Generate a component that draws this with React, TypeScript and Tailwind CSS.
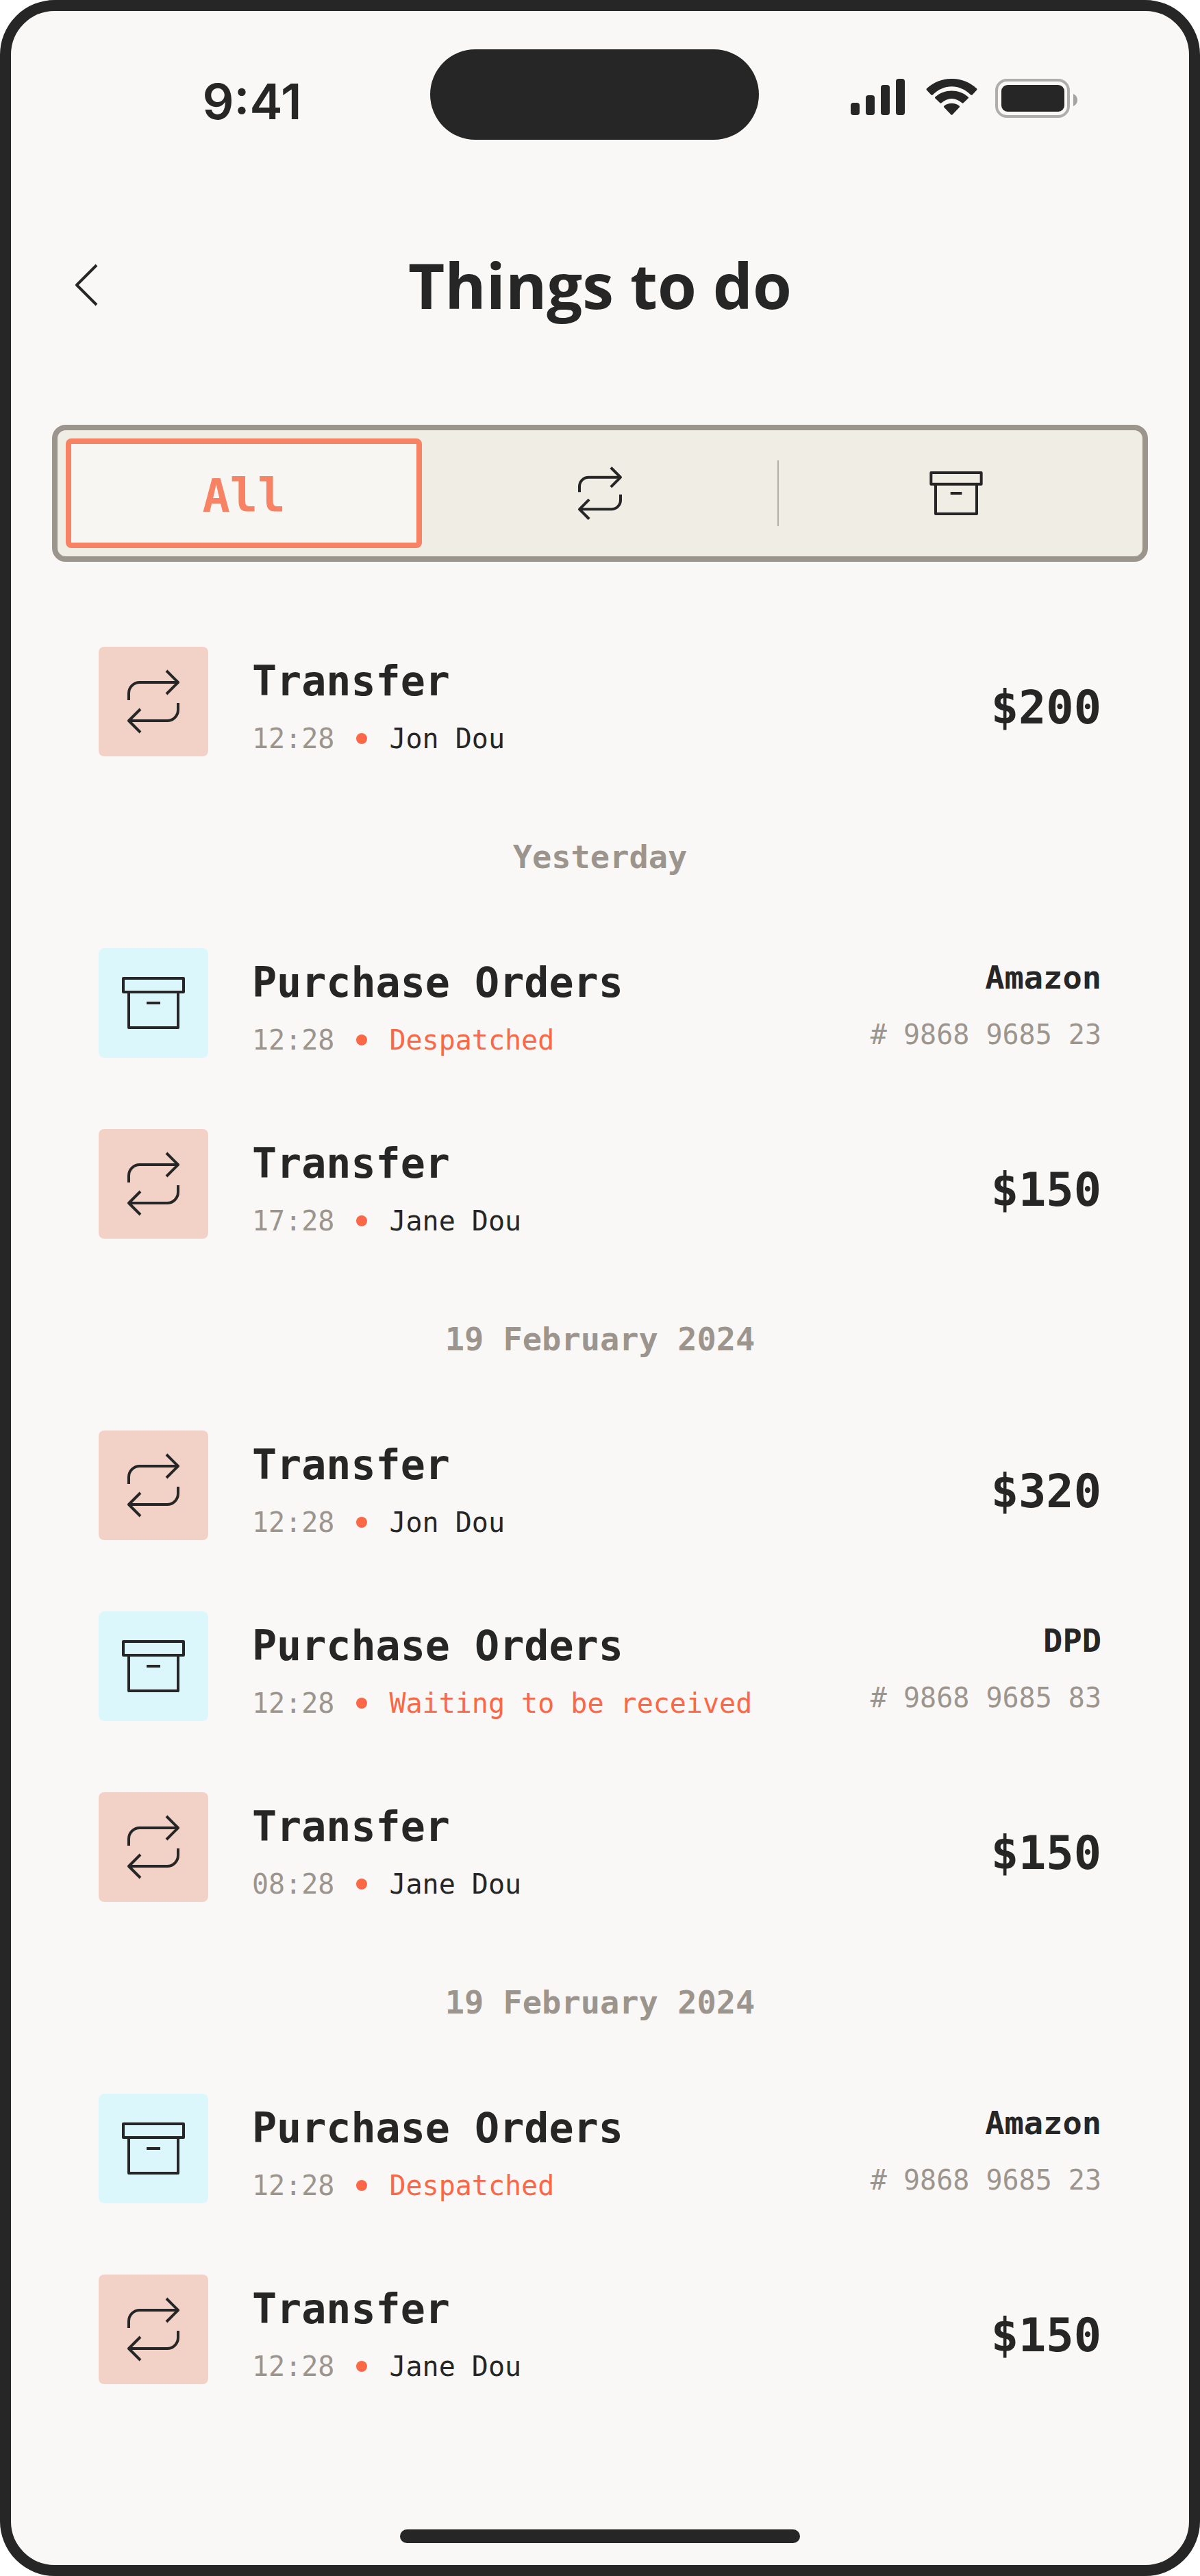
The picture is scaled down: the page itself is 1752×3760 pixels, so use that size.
import { useState } from 'react';

type Tab = 'all' | 'transfer' | 'order';

interface Item {
  id: number;
  kind: 'transfer' | 'order';
  time: string;
  detail: string;
  amount?: string;
  shop?: string;
  tracking?: string;
}

interface Day {
  id: string;
  label: string | null;
  items: Item[];
}

const days: Day[] = [
  {
    id: 'today',
    label: null,
    items: [{ id: 1, kind: 'transfer', time: '12:28', detail: 'Jon Dou', amount: '$200' }],
  },
  {
    id: 'yesterday',
    label: 'Yesterday',
    items: [
      { id: 2, kind: 'order', time: '12:28', detail: 'Despatched', shop: 'Amazon', tracking: '# 9868 9685 23' },
      { id: 3, kind: 'transfer', time: '17:28', detail: 'Jane Dou', amount: '$150' },
    ],
  },
  {
    id: 'feb-19-a',
    label: '19 February 2024',
    items: [
      { id: 4, kind: 'transfer', time: '12:28', detail: 'Jon Dou', amount: '$320' },
      { id: 5, kind: 'order', time: '12:28', detail: 'Waiting to be received', shop: 'DPD', tracking: '# 9868 9685 83' },
      { id: 6, kind: 'transfer', time: '08:28', detail: 'Jane Dou', amount: '$150' },
    ],
  },
  {
    id: 'feb-19-b',
    label: '19 February 2024',
    items: [
      { id: 7, kind: 'order', time: '12:28', detail: 'Despatched', shop: 'Amazon', tracking: '# 9868 9685 23' },
      { id: 8, kind: 'transfer', time: '12:28', detail: 'Jane Dou', amount: '$150' },
    ],
  },
];

interface IconProps {
  className: string;
  strokeWidth?: number;
}

function TransferIcon({ className, strokeWidth = 4 }: IconProps) {
  return (
    <svg viewBox="0 0 96 96" fill="none" stroke="currentColor" strokeWidth={strokeWidth} strokeLinejoin="round" className={className} aria-hidden="true">
      <path d="M12 46V36A16 16 0 0 1 28 20H84" />
      <path d="M67 3L84 20L67 37" />
      <path d="M84 50V60A16 16 0 0 1 68 76H12" />
      <path d="M29 59L12 76L29 93" />
    </svg>
  );
}

function BoxIcon({ className, strokeWidth = 4 }: IconProps) {
  return (
    <svg viewBox="0 0 96 96" fill="none" stroke="currentColor" strokeWidth={strokeWidth} strokeLinejoin="round" className={className} aria-hidden="true">
      <path d="M4 12H92V32H4Z" />
      <path d="M12 32V84H84V32" />
      <path d="M38 48H58" />
    </svg>
  );
}

function StatusIcons() {
  return (
    <svg viewBox="0 0 332 58" fill="currentColor" className="h-[58px] w-[332px]" aria-hidden="true">
      <rect x="0" y="35" width="13" height="18" rx="4" />
      <rect x="22" y="24" width="13" height="29" rx="4" />
      <rect x="44" y="9" width="13" height="44" rx="4" />
      <rect x="66" y="0" width="13" height="53" rx="4" />
      <path d="M184 16.500L177.500 23.500C176.900 24 176 24 175.300 23.400C167.500 15.500 157.500 11.200 147.500 11.200C137.500 11.200 127.500 15.500 119.700 23.400C119 24 118.100 24 117.500 23.500L111 16.500C110.300 15.900 110.300 15 111 14.300C131.400-4.800 163.600-4.800 184 14.300C184.700 15 184.700 15.900 184 16.500Z" />
      <path d="M147.500 29C152.900 29 158.300 31.300 162.500 35.300C163.100 35.900 164 35.900 164.600 35.300L171.600 28.600C172.200 28 172.200 27.200 171.600 26.600C158.100 14.600 136.900 14.600 123.400 26.600C122.800 27.200 122.800 28 123.400 28.600L130.400 35.300C131 35.900 131.900 35.900 132.500 35.300C136.700 31.300 142.100 29 147.500 29Z" />
      <path d="M158.600 41.800C159.200 41.200 159.200 40.200 158.500 39.600C152.200 34.600 142.800 34.600 136.500 39.600C135.800 40.200 135.800 41.200 136.400 41.800L146.400 52.200C147 52.900 148 52.900 148.600 52.200Z" />
      <rect x="213" y="2" width="105" height="53" rx="15" fill="none" stroke="currentColor" strokeWidth="4" opacity="0.35" />
      <path d="M325 22V40C328.600 38.500 331 35 331 31C331 27 328.600 23.500 325 22Z" opacity="0.4" />
      <rect x="220" y="9" width="92" height="39" rx="9" />
    </svg>
  );
}

function ItemRow({ item }: { item: Item }) {
  const isTransfer = item.kind === 'transfer';

  return (
    <li className="flex h-40 items-start">
      <div
        className={`flex size-40 shrink-0 items-center justify-center rounded-lg ${
          isTransfer ? 'bg-[#f2d2c6]' : 'bg-[#dcf7fb]'
        }`}
      >
        {isTransfer ? <TransferIcon className="size-24" /> : <BoxIcon className="size-24" />}
      </div>
      <div className="ml-16 flex-1">
        <h2 className="text-[60px] leading-[100px] font-bold">{isTransfer ? 'Transfer' : 'Purchase Orders'}</h2>
        <p className="flex items-center gap-8 text-[40px] leading-[68px]">
          <span className="text-[#9c958e]">{item.time}</span>
          <span className="size-4 rounded-full bg-[#fa6847]" />
          <span className={isTransfer ? '' : 'text-[#fa6847]'}>{item.detail}</span>
        </p>
      </div>
      {isTransfer ? (
        <p className="self-end text-[67px] leading-[142px] font-bold">{item.amount}</p>
      ) : (
        <div className="text-right">
          <p className="text-[47px] leading-[86px] font-bold">{item.shop}</p>
          <p className="text-[40px] leading-[80px] text-[#9c958e]">{item.tracking}</p>
        </div>
      )}
    </li>
  );
}

const tabBase = 'flex flex-1 items-center justify-center rounded-lg border-8';
const tabOn = 'border-[#f88364] bg-[#f8f6f2] text-[#f88364]';
const tabOff = 'border-transparent';

export default function App() {
  const [tab, setTab] = useState<Tab>('all');

  const visibleDays = days
    .map((day) => ({ ...day, items: day.items.filter((item) => tab === 'all' || item.kind === tab) }))
    .filter((day) => day.items.length > 0);

  return (
    <div className="bg-white">
      <div className="flex min-h-screen flex-col rounded-[80px] border-[16px] border-[#262626] bg-[#faf8f6] font-['DejaVu_Sans_Mono',monospace] text-[#262626]">
        <div className="mt-14 grid h-[132px] grid-cols-[1fr_480px_1fr] items-center pr-4">
          <div className="flex justify-center pt-5 pl-[92px] font-['Inter',sans-serif] text-[72px] leading-[72px] font-semibold">
            9:41
          </div>
          <div className="h-full rounded-full bg-[#262626]" />
          <div className="flex justify-center pt-3 pr-3">
            <StatusIcons />
          </div>
        </div>

        <header className="mx-[60px] mt-[164px] grid grid-cols-[96px_1fr_96px] items-center">
          <button type="button" aria-label="Back" className="size-24">
            <svg viewBox="0 0 96 96" fill="none" stroke="currentColor" strokeWidth="4" strokeLinejoin="round" className="size-24" aria-hidden="true">
              <path d="M65 19L36 48L65 77" />
            </svg>
          </button>
          <h1 className="text-center font-['Open_Sans',sans-serif] text-[92px] leading-[96px] font-bold">Things to do</h1>
        </header>

        <div className="mx-[60px] mt-[156px] flex h-[200px] rounded-[20px] border-8 border-[#9c958e] bg-[#f0ede5] p-3">
          <button
            type="button"
            aria-pressed={tab === 'all'}
            onClick={() => setTab('all')}
            className={`${tabBase} pt-2 text-[67px] font-bold ${tab === 'all' ? tabOn : tabOff}`}
          >
            All
          </button>
          <button
            type="button"
            aria-label="Transfers"
            aria-pressed={tab === 'transfer'}
            onClick={() => setTab('transfer')}
            className={`${tabBase} ${tab === 'transfer' ? tabOn : tabOff}`}
          >
            <TransferIcon className="size-20" strokeWidth={4.8} />
          </button>
          <span className="-mx-px h-24 w-0.5 self-center bg-[#9c958e]/70" />
          <button
            type="button"
            aria-label="Purchase orders"
            aria-pressed={tab === 'order'}
            onClick={() => setTab('order')}
            className={`${tabBase} ${tab === 'order' ? tabOn : tabOff}`}
          >
            <BoxIcon className="size-20" strokeWidth={4.8} />
          </button>
        </div>

        <main className="mx-32 mt-[124px] mb-[104px] flex flex-col gap-[104px]">
          {visibleDays.map((day) => (
            <section key={day.id} className="flex flex-col gap-[104px]">
              {day.label && (
                <h3 className="h-[72px] text-center text-[47px] leading-[86px] font-bold text-[#9c958e]">{day.label}</h3>
              )}
              <ul className="flex flex-col gap-[104px]">
                {day.items.map((item) => (
                  <ItemRow key={item.id} item={item} />
                ))}
              </ul>
            </section>
          ))}
        </main>

        <div className="mx-auto mt-auto mb-8 h-5 w-[584px] rounded-full bg-[#262626]" />
      </div>
    </div>
  );
}
